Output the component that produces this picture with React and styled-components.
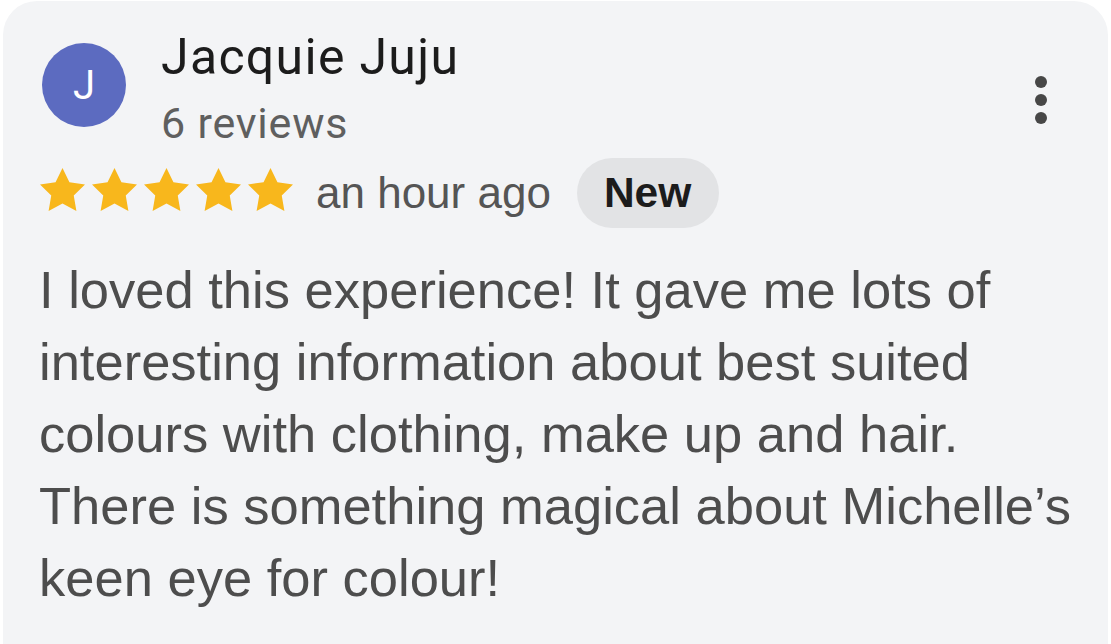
import React from "react";
import styled, { createGlobalStyle } from "styled-components";

const Global = createGlobalStyle`
  html, body { margin: 0; padding: 0; background: #ffffff; }
  body { font-family: "Liberation Sans", Arial, sans-serif; }
  * { box-sizing: border-box; }
`;

const Card = styled.article`
  margin: 1px 3px 0 3px;
  min-height: 643px;
  background: #f3f4f6;
  border-radius: 34px 34px 0 0;
  padding: 28px 36px 0 36px;
  display: flex;
  flex-direction: column;
`;

const Header = styled.header`
  display: flex;
  align-items: flex-start;
`;

const Avatar = styled.div`
  width: 84px;
  height: 84px;
  margin: 14px 0 0 3px;
  border-radius: 50%;
  background: #5c6bc0;
  color: #ffffff;
  display: flex;
  align-items: center;
  justify-content: center;
  font-family: Roboto, "Liberation Sans", sans-serif;
  font-size: 40px;
  flex-shrink: 0;
`;

const Who = styled.div`
  margin-left: 35px;
  display: flex;
  flex-direction: column;
  flex: 1;
`;

const Name = styled.div`
  font-family: Roboto, "Liberation Sans", sans-serif;
  font-size: 50px;
  letter-spacing: 1.3px;
  line-height: 56px;
  color: #1c1c1c;
`;

const Count = styled.div`
  margin-top: 10px;
  font-family: Roboto, "Liberation Sans", sans-serif;
  font-size: 43px;
  letter-spacing: 0.8px;
  line-height: 56px;
  color: #5f5f5f;
`;

const More = styled.div`
  margin: 47px 25px 0 0;
  display: flex;
  flex-direction: column;
  gap: 6px;
`;

const Dot = styled.span`
  width: 12px;
  height: 12px;
  border-radius: 50%;
  background: #474747;
`;

const Meta = styled.div`
  margin-top: 7px;
  display: flex;
  align-items: center;
  height: 70px;
`;

const Stars = styled.div`
  display: flex;
  gap: 7px;
  margin-left: 1px;
  margin-top: -8px;
`;

const Star = styled.svg`
  width: 45px;
  height: 43px;
  fill: #f8b71c;
`;

const Ago = styled.span`
  margin-left: 23px;
  font-size: 44px;
  color: #555555;
`;

const Badge = styled.span`
  margin-left: 26px;
  height: 70px;
  padding: 0 28px 0 27px;
  border-radius: 35px;
  background: #e2e3e5;
  color: #1c1c1c;
  font-size: 42.5px;
  font-weight: 700;
  display: flex;
  align-items: center;
`;

const Body = styled.p`
  margin: 26px 0 0 0;
  font-size: 52.5px;
  line-height: 72px;
  color: #4d4d4d;
  max-width: 1060px;
`;

const StarIcon = () => (
  <Star viewBox="2 2 20 19.02">
    <path d="M12 2l3.09 6.26L22 9.27l-5 4.87 1.18 6.88L12 17.77l-6.18 3.25L7 14.14 2 9.27l6.91-1.01L12 2z" />
  </Star>
);

export default function App() {
  return (
    <>
      <Global />
      <Card>
        <Header>
          <Avatar>J</Avatar>
          <Who>
            <Name>Jacquie Juju</Name>
            <Count>6 reviews</Count>
          </Who>
          <More>
            <Dot />
            <Dot />
            <Dot />
          </More>
        </Header>
        <Meta>
          <Stars>
            {[0, 1, 2, 3, 4].map((i) => (
              <StarIcon key={i} />
            ))}
          </Stars>
          <Ago>an hour ago</Ago>
          <Badge>New</Badge>
        </Meta>
        <Body>
          I loved this experience! It gave me lots of interesting information about best suited colours with clothing, make up and hair. There is something magical about Michelle’s keen eye for colour!
        </Body>
      </Card>
    </>
  );
}
